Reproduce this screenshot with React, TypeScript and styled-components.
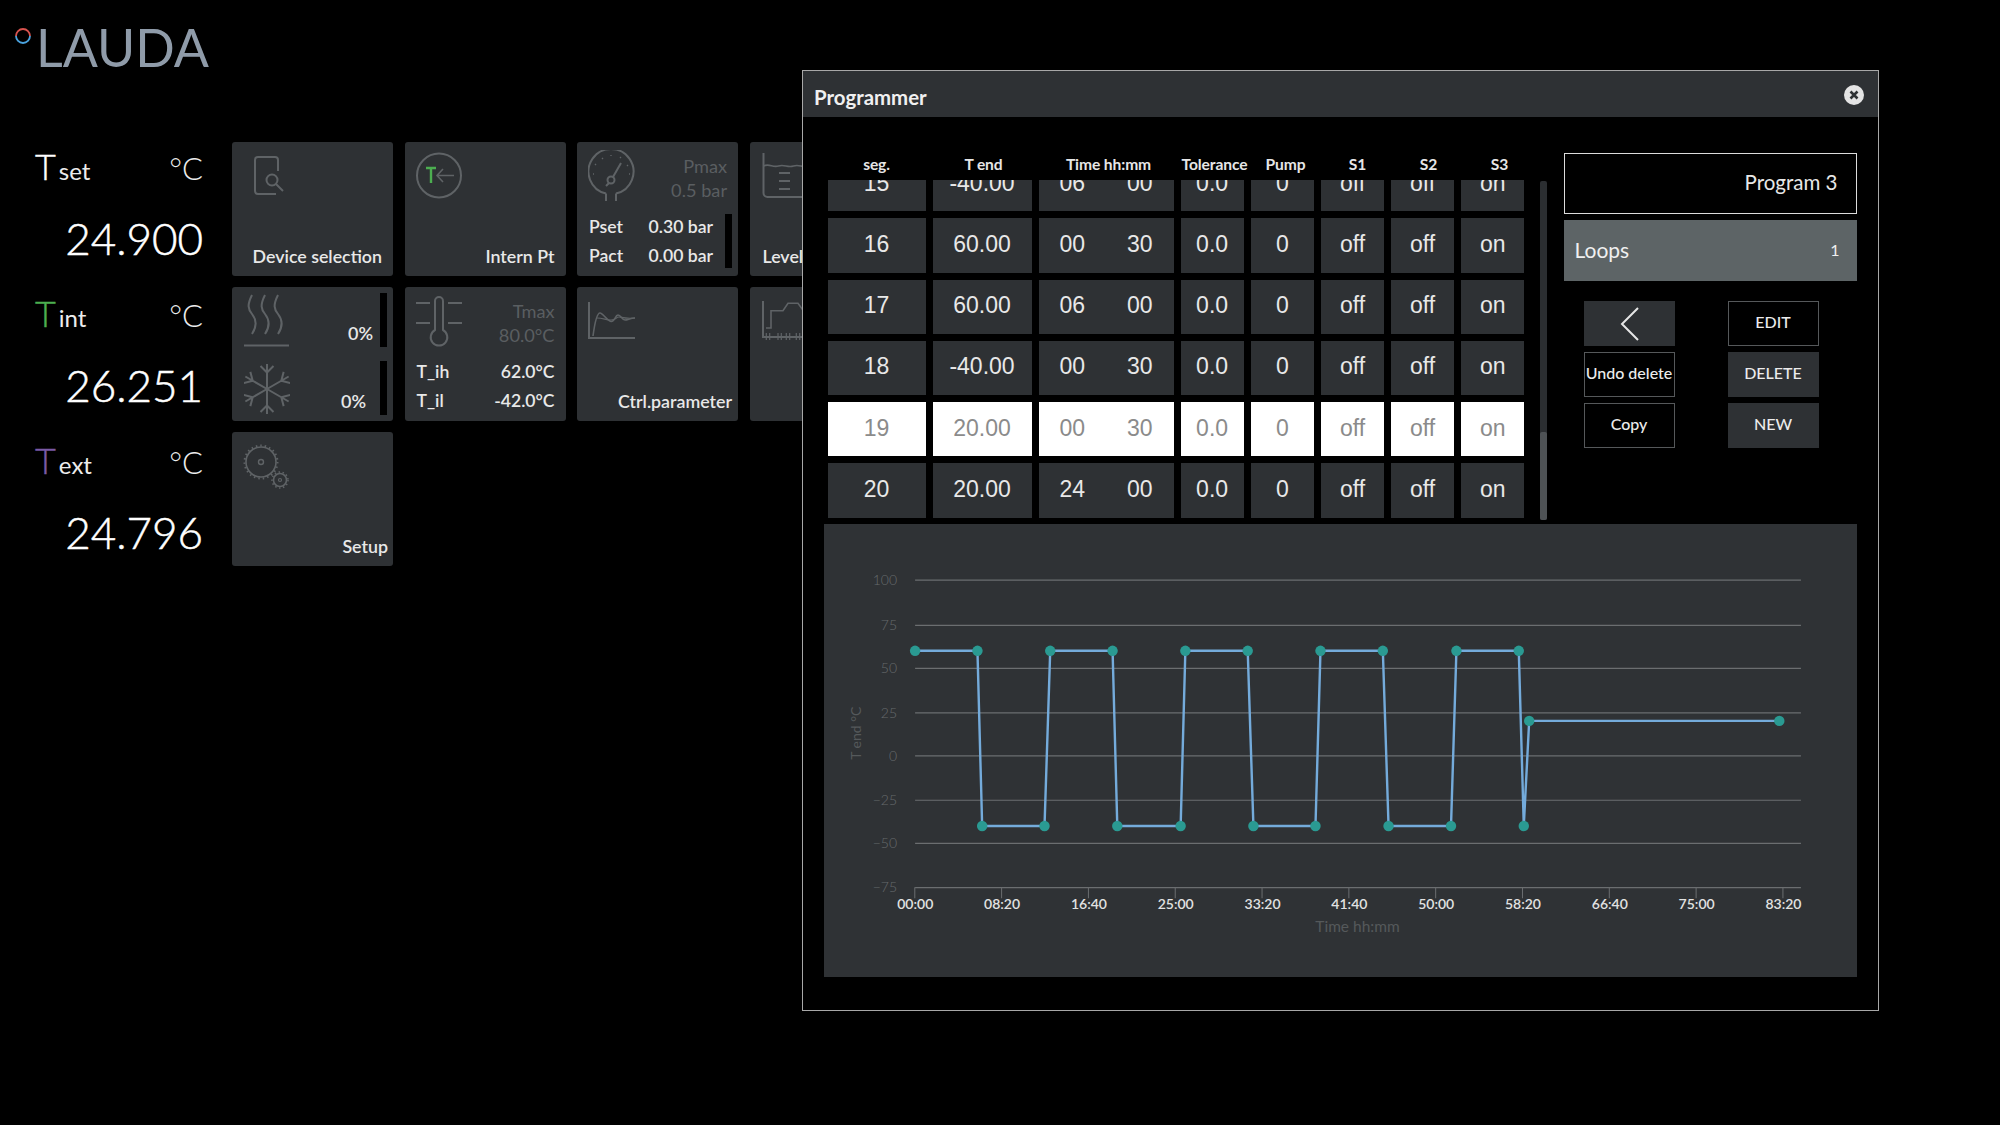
import React from 'react'
import styled, { createGlobalStyle } from 'styled-components'

const GlobalStyle = createGlobalStyle`
  html, body {
    margin: 0;
    padding: 0;
    background: #000;
  }
  body {
    font-family: Lato, "Open Sans", sans-serif;
    color: #ececec;
  }
  * {
    box-sizing: border-box;
  }
`

const Page = styled.div`
  position: relative;
  width: 2000px;
  height: 1125px;
  overflow: hidden;
  background: #000;
`
const Header = styled.header`
  display: flex;
  align-items: center;
  height: 142px;
  padding: 0 0 48px 14px;
`
const LogoMark = styled.svg`
  width: 18px;
  height: 18px;
  margin: 0 4px 23px 0;
`
const LogoText = styled.div`
  font-size: 52px;
  line-height: 60px;
  font-weight: 400;
  color: #8f9ba9;
`
const Dashboard = styled.main`
  display: flex;
  align-items: flex-start;
  padding-left: 35px;
`
const Readings = styled.section`
  width: 168px;
  margin-right: 29px;
`
const Reading = styled.div`
  height: 147px;
`
const ReadingHead = styled.div`
  display: flex;
  align-items: baseline;
  height: 50px;
  line-height: 48px;
`
const BigT = styled.span<{ $color: string }>`
  font-size: 36px;
  font-weight: 300;
  color: ${p => p.$color};
  -webkit-text-stroke: 0.4px ${p => p.$color};
`
const Sub = styled.span`
  font-size: 24px;
  margin-left: 3px;
  flex: 1;
`
const Unit = styled.span`
  font-size: 31px;
  font-weight: 300;
`
const ReadingValue = styled.div`
  font-size: 44px;
  line-height: 58px;
  margin-top: 16.5px;
  text-align: right;
  font-weight: 300;
  color: #fff;
  -webkit-text-stroke: 0.5px #fff;
`
const TileGrid = styled.section`
  display: grid;
  grid-template-columns: repeat(4, 161px);
  grid-auto-rows: 133.5px;
  gap: 11.5px;
`
const Tile = styled.div`
  display: flex;
  flex-direction: column;
  background: #2e3134;
  border-radius: 3px;
  font-size: 18px;
  color: #e8e8e8;
`
const TileIcon = styled.svg<{ $x: number; $y: number }>`
  display: block;
  flex: none;
  margin: ${p => p.$y}px 0 0 ${p => p.$x}px;
  fill: none;
  stroke: #5f6366;
  stroke-width: 2;
`
const TileLabel = styled.div<{ $inset: number; $left?: boolean }>`
  margin-top: auto;
  padding: 0 ${p => (p.$left ? 0 : p.$inset)}px 10px ${p => (p.$left ? p.$inset : 0)}px;
  line-height: 20px;
  font-size: 17.8px;
  font-weight: 600;
  white-space: nowrap;
  text-align: ${p => (p.$left ? 'left' : 'right')};
`
const TileTop = styled.div`
  display: flex;
  justify-content: space-between;
  height: 73px;
  padding-right: 11px;
`
const Limit = styled.div`
  padding-top: 12px;
  font-size: 18.2px;
  line-height: 24px;
  text-align: right;
  color: #5a5e61;
`
const TileBottom = styled.div`
  flex: 1;
  display: flex;
  align-items: center;
  gap: 12px;
  padding: 0 6px 6px 12px;
`
const ValueRows = styled.div<{ $wide?: boolean }>`
  flex: 1;
  padding-right: ${p => (p.$wide ? 5 : 0)}px;
`
const ValueRow = styled.div`
  display: flex;
  justify-content: space-between;
  line-height: 29px;
  font-weight: 600;
  font-size: 17.6px;
`
const LevelBar = styled.div<{ $h?: number }>`
  flex: none;
  width: 7px;
  height: ${p => p.$h ?? 54}px;
  background: #000;
`
const Half = styled.div<{ $top: number }>`
  display: flex;
  align-items: flex-end;
  height: 54px;
  margin-top: ${p => p.$top}px;
  padding-right: 6px;
`
const Percent = styled.span<{ $gap: number }>`
  margin-left: auto;
  margin-right: ${p => p.$gap}px;
  padding-bottom: 4px;
  line-height: 20px;
  font-weight: 600;
`

const Modal = styled.section`
  position: absolute;
  left: 802px;
  top: 70px;
  width: 1077px;
  height: 941px;
  display: flex;
  flex-direction: column;
  background: #000;
  border: 1.5px solid #a8a8a8;
`
const TitleBar = styled.div`
  flex: none;
  display: flex;
  align-items: center;
  justify-content: space-between;
  height: 46px;
  padding: 5px 13px 0 11px;
  background: #2e3134;
`
const Title = styled.div`
  font-size: 20.4px;
  font-weight: 700;
  color: #f0f0f0;
`
const CloseButton = styled.svg`
  width: 22px;
  height: 22px;
  margin-bottom: 3px;
`
const ModalBody = styled.div`
  flex: 1;
  display: flex;
  flex-direction: column;
  padding: 0 21px 34px 20.5px;
`
const TopSection = styled.div`
  flex: none;
  display: flex;
  height: 407px;
  padding-left: 4px;
`
const TableArea = styled.div`
  width: 697px;
  padding-top: 36px;
`
const HeadColumns = styled.div`
  display: grid;
  grid-template-columns: 98px 116px 134px 78px 64px 80px 62px 80px;
  width: 712px;
`
const Columns = styled.div`
  display: grid;
  grid-template-columns: 98px 99px 135px repeat(5, 63.2px);
  column-gap: 7px;
`
const HeadCell = styled.div`
  height: 27px;
  line-height: 23px;
  font-size: 15.6px;
  font-weight: 700;
  letter-spacing: -0.1px;
  text-align: center;
  white-space: nowrap;
  color: #e6e6e6;
`
const Scroller = styled.div`
  height: 340px;
  overflow: hidden;
`
const RowList = styled.div`
  display: flex;
  flex-direction: column;
  gap: 7px;
  margin-top: -23px;
`
const Cell = styled.div<{ $active?: boolean }>`
  display: flex;
  align-items: center;
  justify-content: space-around;
  height: 54.25px;
  padding-bottom: 2px;
  font-family: "Liberation Sans", Arial, sans-serif;
  font-size: 23px;
  background: ${p => (p.$active ? '#fff' : '#2e3134')};
  color: ${p => (p.$active ? '#8b8b8b' : '#e8e8e8')};
`
const ScrollTrack = styled.div`
  position: relative;
  flex: none;
  width: 6.5px;
  height: 339px;
  margin: 64px 0 0 15.5px;
  background: #2b2e31;
  border-radius: 2px;
`
const ScrollThumb = styled.div`
  position: absolute;
  left: 0;
  right: 0;
  bottom: 0;
  height: 88px;
  background: #4e5255;
  border-radius: 2px;
`
const SidePanel = styled.div`
  flex: none;
  width: 293px;
  margin-left: 17px;
  padding-top: 36px;
`
const ProgramName = styled.div`
  height: 61px;
  line-height: 57px;
  padding-right: 18px;
  text-align: right;
  font-size: 20.5px;
  border: 1.5px solid #dcdcdc;
  color: #e8e8e8;
`
const LoopsRow = styled.div`
  display: flex;
  align-items: center;
  justify-content: space-between;
  height: 61px;
  margin-top: 6px;
  padding: 0 17px 2px 11px;
  background: #5d6466;
  font-size: 21px;
  color: #f0f0f0;
`
const LoopsCount = styled.span`
  font-size: 16px;
`
const ButtonGrid = styled.div`
  display: grid;
  grid-template-columns: 91px 91px;
  grid-auto-rows: 45px;
  column-gap: 53px;
  row-gap: 6px;
  margin: 20px 0 0 20px;
`
const ActionButton = styled.button<{ $filled?: boolean }>`
  display: flex;
  align-items: center;
  justify-content: center;
  padding: 0 0 4px;
  font-family: inherit;
  font-size: 16px;
  font-weight: 500;
  white-space: nowrap;
  color: #ececec;
  background: ${p => (p.$filled ? '#2e3134' : '#000')};
  border: 1px solid ${p => (p.$filled ? '#2e3134' : '#55585a')};
`
const ChevronIcon = styled.svg`
  width: 22px;
  height: 36px;
  margin: 4px 0 0 2px;
  fill: none;
  stroke: #e6e6e6;
  stroke-width: 2;
`
const ChartPanel = styled.div`
  flex: 1;
  background: #2f3235;
`
const ChartSvg = styled.svg`
  display: block;
  width: 100%;
  height: 100%;
  font-family: Lato, sans-serif;
`

const headers = ['seg.', 'T end', 'Time hh:mm', 'Tolerance', 'Pump', 'S1', 'S2', 'S3']

const rows = [
  ['15', '-40.00', '06', '00'],
  ['16', '60.00', '00', '30'],
  ['17', '60.00', '06', '00'],
  ['18', '-40.00', '00', '30'],
  ['19', '20.00', '00', '30'],
  ['20', '20.00', '24', '00'],
]

const gridLines = [
  { label: '100', y: 580 },
  { label: '75', y: 625.3 },
  { label: '50', y: 668.3 },
  { label: '25', y: 712.7 },
  { label: '0', y: 755.7 },
  { label: '−25', y: 800 },
  { label: '−50', y: 843 },
]
const xTicks = ['00:00', '08:20', '16:40', '25:00', '33:20', '41:40', '50:00', '58:20', '66:40', '75:00', '83:20']

const HI = 650.7
const LO = 825.7
const points: [number, number][] = [
  [915, HI], [977.3, HI], [982, LO], [1044.3, LO], [1050, HI], [1112.3, HI], [1117, LO], [1180.3, LO],
  [1185, HI], [1247.3, HI], [1253, LO], [1315, LO], [1320, HI], [1382.3, HI], [1388, LO], [1450.4, LO],
  [1455.8, HI], [1518.1, HI], [1523.1, LO], [1528.5, 720.7], [1778.4, 720.7],
]

function Chart() {
  return (
    <ChartSvg viewBox="824 524 1032.500 453">
      {gridLines.map(g => (
        <g key={g.label}>
          <line x1={915} x2={1800} y1={g.y} y2={g.y} stroke="#6b6e70" strokeWidth={1.2} />
          <text x={897} y={g.y + 5} textAnchor="end" fontSize={14} fill="#666a6c" fontWeight={300}>{g.label}</text>
        </g>
      ))}
      <line x1={915} x2={1800} y1={887.3} y2={887.3} stroke="#6b6e70" strokeWidth={1.2} />
      <text x={897} y={892} textAnchor="end" fontSize={14} fill="#666a6c" fontWeight={300}>−75</text>
      {xTicks.map((t, i) => {
        const x = 914.7 + i * 86.73
        return (
          <g key={t}>
            <line x1={x} x2={x} y1={887} y2={898} stroke="#6b6e70" strokeWidth={1} />
            <text x={x + 0.5} y={909} textAnchor="middle" fontSize={14} fontWeight={600} fill="#e2e2e2">{t}</text>
          </g>
        )
      })}
      <text x={1357} y={932} textAnchor="middle" fontSize={15.5} fill="#55595b">Time hh:mm</text>
      <text transform="translate(861 733) rotate(-90)" textAnchor="middle" fontSize={14} fill="#55595b">T end °C</text>
      <polyline points={points.map(p => p.join(',')).join(' ')} fill="none" stroke="#74abdb" strokeWidth={2.4} />
      {points.map((p, i) => (
        <circle key={i} cx={p[0]} cy={p[1]} r={5.2} fill="#2a9a92" />
      ))}
    </ChartSvg>
  )
}

function DeviceIcon() {
  return (
    <TileIcon $x={22} $y={13} width={32} height={42} viewBox="0 0 32 42">
      <path d="M24 16V5a3 3 0 0 0-3-3H4a3 3 0 0 0-3 3v31a3 3 0 0 0 3 3h18" />
      <circle cx={18} cy={25} r={5.5} />
      <path d="M22 29l7 7" />
    </TileIcon>
  )
}

function InternIcon() {
  return (
    <TileIcon $x={11} $y={10} width={48} height={48} viewBox="0 0 48 48">
      <circle cx={23} cy={23.5} r={22} />
      <path d="M10 16h10M15 16v15" stroke="#4cae50" strokeWidth={2.4} />
      <path d="M38 23.500H21M27 17l-6 6.500 6 6.500" strokeWidth={1.6} />
    </TileIcon>
  )
}

function GaugeIcon() {
  return (
    <TileIcon $x={11} $y={8} width={48} height={54} viewBox="0 0 48 54">
      <path d="M18 43.500A22.500 22.500 0 1 1 28 43.500" />
      <path d="M18 43.500V51M28 43.500V51" />
      <circle cx={23} cy={30} r={3.500} />
      <path d="M25 27l8-14M21 33l-3 3" />
      <path d="M7 14l1 1M14 8l1 1M23 5v1M33 7l-1 1M40 15l-1 1M42 24h-1M5 24h1" strokeWidth={1.400} />
    </TileIcon>
  )
}

function LevelIcon() {
  return (
    <TileIcon $x={12} $y={10} width={70} height={50} viewBox="0 0 70 50">
      <path d="M1.500 1v40a4 4 0 0 0 4 4H70" />
      <path d="M1.500 14c6-3 9 2 15 0s9 2 15 0 9 2 15 0 9 2 23 0" strokeWidth={1.600} />
      <path d="M17 21h11M17 29h11M17 37h11" />
    </TileIcon>
  )
}

function ThermoIcon() {
  return (
    <TileIcon $x={11} $y={8} width={48} height={54} viewBox="0 0 48 54">
      <path d="M19 34V5a4 4 0 0 1 8 0v29a8.300 8.300 0 1 1-8 0z" transform="translate(0 1)" />
      <path d="M0 8h14M32 8h14M0 28h14M32 28h14" />
    </TileIcon>
  )
}

function CtrlIcon() {
  return (
    <TileIcon $x={11} $y={14} width={48} height={38} viewBox="0 0 48 38">
      <path d="M1 1v36h46" />
      <path d="M5 35C7 20 9 12 12 12s7 8 11 8.500 4-6.500 7-6.500 4 5 7 5 5-2 10-2" strokeWidth={1.600} />
      <path d="M9 17c6 0 9 2 14 2s5-3 8-3 5 2 16 1" strokeWidth={1.200} />
    </TileIcon>
  )
}

function ProgramIcon() {
  return (
    <TileIcon $x={12} $y={13} width={70} height={40} viewBox="0 0 70 40">
      <path d="M1 1v36h69" />
      <path d="M4 28h5V10.700h12l5-7.400h10l5 7h29" strokeWidth={1.600} />
      <path d="M4.300 33v7M7.700 33v7M16 33v7M19.300 33v7M24.300 33v7M27.700 33v7M34.300 33v7M37.700 33v7" strokeWidth={1.200} />
    </TileIcon>
  )
}

function HeatIcon() {
  return (
    <TileIcon $x={12} $y={1} width={46} height={54} viewBox="0 0 46 54">
      {[8, 21, 34].map(x => (
        <path key={x} d={`M${x} 2C${x - 5} 12 ${x - 4} 16 ${x} 21S${x + 6} 32 ${x} 41`} />
      ))}
      <path d="M0 52.500h45" />
    </TileIcon>
  )
}

function SnowIcon() {
  return (
    <TileIcon $x={12} $y={1} width={46} height={52} viewBox="-23 -26 46 52">
      {[0, 60, 120, 180, 240, 300].map(a => (
        <path key={a} transform={`rotate(${a})`} d="M0 0V-25M-6.500 -23L0 -16.500 6.500 -23" />
      ))}
    </TileIcon>
  )
}

function GearIcon() {
  return (
    <TileIcon $x={11} $y={10} width={50} height={50} viewBox="0 0 50 50">
      <circle cx={18} cy={20} r={15} strokeWidth={1.600} />
      <circle cx={18} cy={20} r={16.500} strokeWidth={2} strokeDasharray="1.500 3" />
      <circle cx={18} cy={20} r={2.500} strokeWidth={1.400} />
      <circle cx={37} cy={38} r={6.500} strokeWidth={1.600} />
      <circle cx={37} cy={38} r={8} strokeWidth={1.600} strokeDasharray="1.500 2.500" />
      <circle cx={37} cy={38} r={1.500} strokeWidth={1.200} />
    </TileIcon>
  )
}

function App() {
  return (
    <Page>
      <GlobalStyle />
      <Header>
        <LogoMark viewBox="0 0 18 18">
          <path d="M2 9a7 7 0 0 1 14 0" fill="none" stroke="#d9534f" strokeWidth={1.800} />
          <path d="M2 9a7 7 0 0 0 14 0" fill="none" stroke="#4aa3df" strokeWidth={1.800} />
        </LogoMark>
        <LogoText>LAUDA</LogoText>
      </Header>

      <Dashboard>
        <Readings>
          <Reading>
            <ReadingHead><BigT $color="#fff">T</BigT><Sub>set</Sub><Unit>°C</Unit></ReadingHead>
            <ReadingValue>24.900</ReadingValue>
          </Reading>
          <Reading>
            <ReadingHead><BigT $color="#4caf50">T</BigT><Sub>int</Sub><Unit>°C</Unit></ReadingHead>
            <ReadingValue>26.251</ReadingValue>
          </Reading>
          <Reading>
            <ReadingHead><BigT $color="#7a5aa6">T</BigT><Sub>ext</Sub><Unit>°C</Unit></ReadingHead>
            <ReadingValue>24.796</ReadingValue>
          </Reading>
        </Readings>

        <TileGrid>
          <Tile>
            <DeviceIcon />
            <TileLabel $inset={11}>Device selection</TileLabel>
          </Tile>
          <Tile>
            <InternIcon />
            <TileLabel $inset={11}>Intern Pt</TileLabel>
          </Tile>
          <Tile>
            <TileTop>
              <GaugeIcon />
              <Limit>Pmax<br />0.5 bar</Limit>
            </TileTop>
            <TileBottom>
              <ValueRows>
                <ValueRow><span>Pset</span><span>0.30 bar</span></ValueRow>
                <ValueRow><span>Pact</span><span>0.00 bar</span></ValueRow>
              </ValueRows>
              <LevelBar />
            </TileBottom>
          </Tile>
          <Tile>
            <LevelIcon />
            <TileLabel $inset={13} $left>Level</TileLabel>
          </Tile>

          <Tile>
            <Half $top={6}>
              <HeatIcon />
              <Percent $gap={7}>0%</Percent>
              <LevelBar />
            </Half>
            <Half $top={14}>
              <SnowIcon />
              <Percent $gap={14}>0%</Percent>
              <LevelBar />
            </Half>
          </Tile>
          <Tile>
            <TileTop>
              <ThermoIcon />
              <Limit>Tmax<br />80.0°C</Limit>
            </TileTop>
            <TileBottom>
              <ValueRows $wide>
                <ValueRow><span>T_ih</span><span>62.0°C</span></ValueRow>
                <ValueRow><span>T_il</span><span>-42.0°C</span></ValueRow>
              </ValueRows>
            </TileBottom>
          </Tile>
          <Tile>
            <CtrlIcon />
            <TileLabel $inset={6}>Ctrl.parameter</TileLabel>
          </Tile>
          <Tile>
            <ProgramIcon />
          </Tile>

          <Tile>
            <GearIcon />
            <TileLabel $inset={5}>Setup</TileLabel>
          </Tile>
        </TileGrid>
      </Dashboard>

      <Modal>
        <TitleBar>
          <Title>Programmer</Title>
          <CloseButton viewBox="0 0 22 22">
            <circle cx={11} cy={11} r={10} fill="#e4e4e4" />
            <path d="M7.500 7.500l7 7M14.500 7.500l-7 7" stroke="#2e3134" strokeWidth={2.600} />
          </CloseButton>
        </TitleBar>
        <ModalBody>
          <TopSection>
            <TableArea>
              <HeadColumns>
                {headers.map(h => (
                  <HeadCell key={h}>{h}</HeadCell>
                ))}
              </HeadColumns>
              <Scroller>
                <RowList>
                  {rows.map(r => {
                    const active = r[0] === '19'
                    return (
                      <Columns key={r[0]}>
                        <Cell $active={active}>{r[0]}</Cell>
                        <Cell $active={active}>{r[1]}</Cell>
                        <Cell $active={active}><span>{r[2]}</span><span>{r[3]}</span></Cell>
                        <Cell $active={active}>0.0</Cell>
                        <Cell $active={active}>0</Cell>
                        <Cell $active={active}>off</Cell>
                        <Cell $active={active}>off</Cell>
                        <Cell $active={active}>on</Cell>
                      </Columns>
                    )
                  })}
                </RowList>
              </Scroller>
            </TableArea>
            <ScrollTrack><ScrollThumb /></ScrollTrack>
            <SidePanel>
              <ProgramName>Program 3</ProgramName>
              <LoopsRow><span>Loops</span><LoopsCount>1</LoopsCount></LoopsRow>
              <ButtonGrid>
                <ActionButton $filled>
                  <ChevronIcon viewBox="0 0 22 36"><path d="M19 2L3 18l16 16" /></ChevronIcon>
                </ActionButton>
                <ActionButton>EDIT</ActionButton>
                <ActionButton>Undo delete</ActionButton>
                <ActionButton $filled>DELETE</ActionButton>
                <ActionButton>Copy</ActionButton>
                <ActionButton $filled>NEW</ActionButton>
              </ButtonGrid>
            </SidePanel>
          </TopSection>
          <ChartPanel>
            <Chart />
          </ChartPanel>
        </ModalBody>
      </Modal>
    </Page>
  )
}

export default App
